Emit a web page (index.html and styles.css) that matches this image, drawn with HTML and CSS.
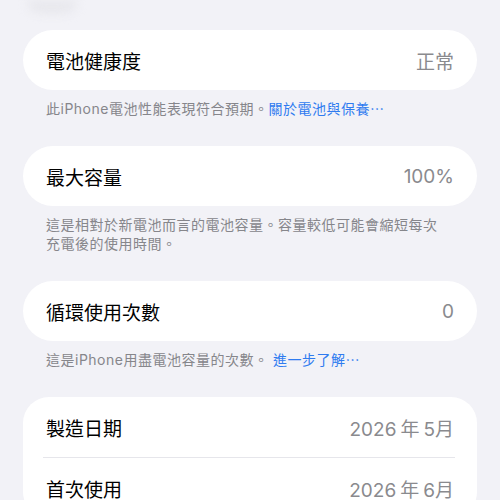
FILE: index.html
```html
<!DOCTYPE html>
<html lang="zh-Hant">
<head>
  <meta charset="UTF-8" />
  <meta name="viewport" content="width=device-width, initial-scale=1.0"/>
  <title>電池健康度</title>
  <link rel="stylesheet" href="styles.css">
</head>
<body>
  <div class="page">
    <div class="top-fade"></div>

    <div class="card">
      <div class="row">
        <span class="label">電池健康度</span>
        <span class="value">正常</span>
      </div>
    </div>
    <p class="note">此iPhone電池性能表現符合預期。<a class="link">關於電池與保養⋯</a></p>

    <div class="card">
      <div class="row">
        <span class="label">最大容量</span>
        <span class="value">100%</span>
      </div>
    </div>
    <p class="note">這是相對於新電池而言的電池容量。容量較低可能會縮短每次充電後的使用時間。</p>

    <div class="card">
      <div class="row">
        <span class="label">循環使用次數</span>
        <span class="value">0</span>
      </div>
    </div>
    <p class="note">這是iPhone用盡電池容量的次數。 <a class="link">進一步了解⋯</a></p>

    <div class="card card-group">
      <div class="row">
        <span class="label">製造日期</span>
        <span class="value">2026<span class="unit">年</span>5月</span>
      </div>
      <div class="divider"></div>
      <div class="row">
        <span class="label">首次使用</span>
        <span class="value">2026<span class="unit">年</span>6月</span>
      </div>
    </div>
  </div>
</body>
</html>
```

FILE: styles.css
```css
* {
  margin: 0; padding: 0; box-sizing: border-box;
  font-family: "Inter", "Noto Sans CJK TC", sans-serif;
}

body {
  background-color: #f2f2f7;
  color: #000000;
}

.page {
  padding: 0 23px;
  height: 500px;
  overflow: hidden;
}

.top-fade {
  width: 50px;
  height: 14px;
  margin-left: 4px;
  margin-bottom: 16px;
  border-radius: 0 0 14px 14px;
  background-color: #e8e8ed;
  filter: blur(5px);
}

.card {
  background-color: #ffffff;
  border-radius: 30px;
}

.card-group {
  border-radius: 26px;
}

.row {
  height: 60px;
  padding: 0 23px;
  display: flex;
  align-items: center;
  justify-content: space-between;
}

.label {
  font-size: 19px;
  color: #000000;
}

.value {
  font-size: 19px;
  color: #8a8a8e;
}

.unit {
  margin: 0 4px;
}

.divider {
  height: 1px;
  margin: 0 22px 0 20px;
  background-color: #e6e6eb;
}

.note {
  padding: 9px 30px 0 23px;
  margin-bottom: 28px;
  font-size: 14px;
  line-height: 19px;
  letter-spacing: 0.5px;
  color: #86868b;
}

.link {
  color: #2f7bf0;
}
```
